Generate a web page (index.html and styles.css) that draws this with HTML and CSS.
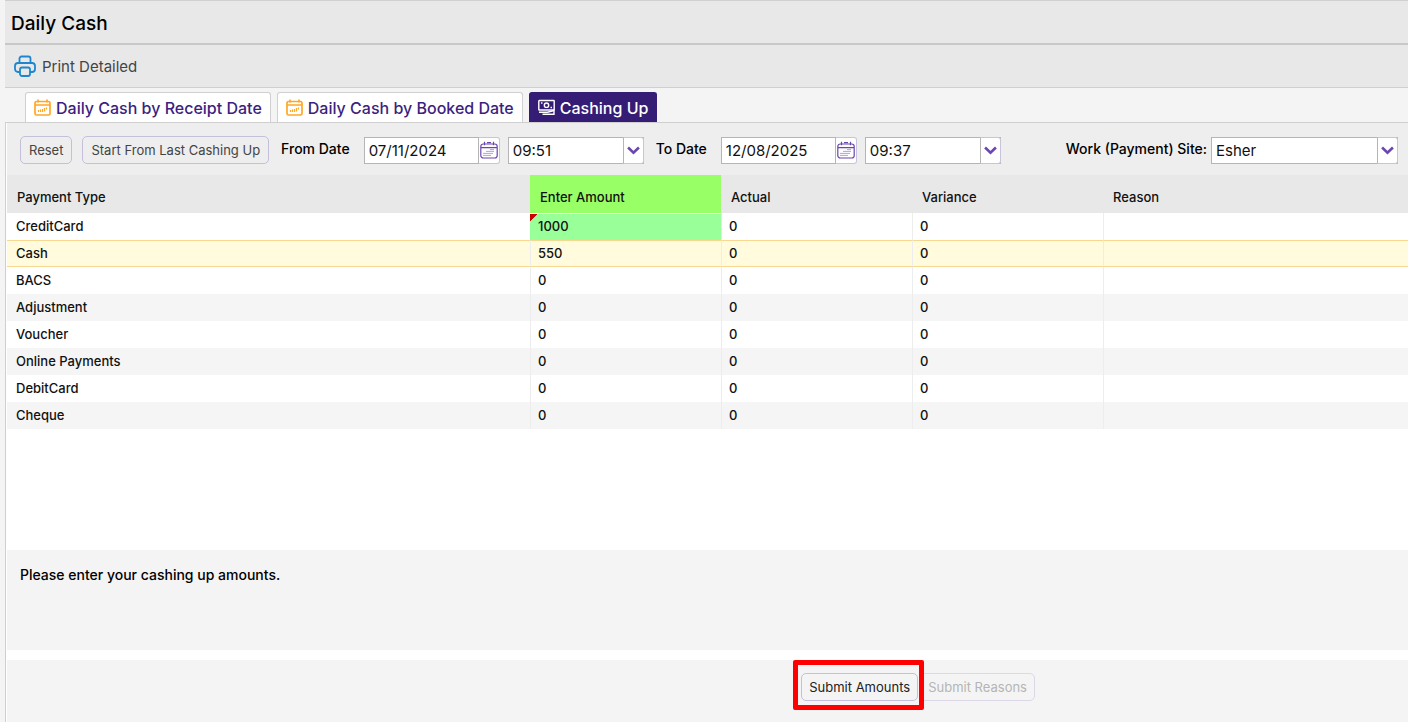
FILE: index.html
```html
<!DOCTYPE html>
<html lang="en">
<head>
    <meta charset="UTF-8">
    <meta name="viewport" content="width=device-width, initial-scale=1.0">
    <title>Daily Cash</title>
    <link rel="stylesheet" href="styles.css">
</head>
<body>
    <!-- Shared icons -->
    <svg class="icon-defs" aria-hidden="true">
        <symbol id="icon-calendar" viewBox="0 0 18 18">
            <g fill="none" stroke="currentColor" stroke-width="1.2">
                <rect x="0.8" y="3" width="16.4" height="14" rx="2.5"/>
                <path d="M1 6.6h16M4.5 0.8v3.4M13.5 0.8v3.4M7 1.6h4"/>
                <path d="M3.5 14.4h8M3.5 12.4h10M6.5 10.4h8M10.5 8.6h4" stroke-width="1" stroke-dasharray="1 1"/>
            </g>
        </symbol>
        <symbol id="icon-tab-calendar" viewBox="0 0 17 17">
            <g fill="none" stroke="currentColor" stroke-width="1.7">
                <rect x="1" y="2.5" width="15" height="13.5" rx="1.5"/>
                <path d="M1 6h15M4 0.5v3M13 0.5v3"/>
                <path d="M4.5 13v-2M6.5 13v-2.500M8.500 13v-3M10.500 12.500V9M12.500 10.500V8.500" stroke-width="1.200"/>
            </g>
        </symbol>
        <symbol id="icon-chevron" viewBox="0 0 12 8">
            <path d="M1 1.200 6 6l5-4.800" fill="none" stroke="currentColor" stroke-width="2.400"/>
        </symbol>
    </svg>

    <div class="page">
        <header class="title-bar">
            <h1>Daily Cash</h1>
        </header>

        <div class="toolbar">
            <button type="button" class="print-button">
                <svg viewBox="0 0 22 22" width="22" height="22" fill="none" stroke="#1c87cf" stroke-width="1.8" stroke-linejoin="round" aria-hidden="true">
                    <path d="M5.500 8V3.500a2 2 0 0 1 2-2h7a2 2 0 0 1 2 2V8"/>
                    <path d="M6 17H4a3 3 0 0 1-3-3v-3a3 3 0 0 1 3-3h14a3 3 0 0 1 3 3v3a3 3 0 0 1-3 3h-2"/>
                    <rect x="6" y="12.500" width="10" height="8.500" rx="2"/>
                </svg>
                Print Detailed
            </button>
        </div>

        <nav class="tabs">
            <a href="#receipt" class="tab">
                <svg class="tab-icon" aria-hidden="true"><use href="#icon-tab-calendar"/></svg>
                Daily Cash by Receipt Date
            </a>
            <a href="#booked" class="tab">
                <svg class="tab-icon" aria-hidden="true"><use href="#icon-tab-calendar"/></svg>
                Daily Cash by Booked Date
            </a>
            <a href="#cashing-up" class="tab active">
                <svg class="tab-icon" viewBox="0 0 17 17" fill="none" stroke="currentColor" stroke-width="1.400" aria-hidden="true">
                    <rect x="0.800" y="1.500" width="15.400" height="9.500" rx="0.500"/>
                    <circle cx="8.500" cy="6.200" r="2.200"/>
                    <path d="M3 4h1.500M12.500 8.500H14"/>
                    <path d="M1 13.200h8.500L16 11.500v3.800H4.500"/>
                </svg>
                Cashing Up
            </a>
        </nav>

        <main class="panel">
            <form class="filters">
                <button type="button" class="button">Reset</button>
                <button type="button" class="button">Start From Last Cashing Up</button>

                <label for="fromDate">From Date</label>
                <div class="date-time">
                    <div class="field">
                        <input type="text" id="fromDate" value="07/11/2024">
                        <button type="button" class="trigger" aria-label="Pick from date"><svg class="calendar"><use href="#icon-calendar"/></svg></button>
                    </div>
                    <div class="field">
                        <select id="fromTime" aria-label="From time">
                            <option>09:51</option>
                        </select>
                        <span class="trigger arrow"><svg class="chevron"><use href="#icon-chevron"/></svg></span>
                    </div>
                </div>

                <label for="toDate">To Date</label>
                <div class="date-time">
                    <div class="field">
                        <input type="text" id="toDate" value="12/08/2025">
                        <button type="button" class="trigger" aria-label="Pick to date"><svg class="calendar"><use href="#icon-calendar"/></svg></button>
                    </div>
                    <div class="field">
                        <select id="toTime" aria-label="To time">
                            <option>09:37</option>
                        </select>
                        <span class="trigger arrow"><svg class="chevron"><use href="#icon-chevron"/></svg></span>
                    </div>
                </div>

                <div class="site">
                    <label for="site">Work (Payment) Site:</label>
                    <div class="field">
                        <select id="site">
                            <option>Esher</option>
                        </select>
                        <span class="trigger arrow"><svg class="chevron"><use href="#icon-chevron"/></svg></span>
                    </div>
                </div>
            </form>

            <div class="grid">
                <table>
                    <colgroup>
                        <col>
                        <col class="amount-col">
                        <col class="amount-col">
                        <col class="amount-col">
                        <col class="reason-col">
                    </colgroup>
                    <thead>
                        <tr>
                            <th>Payment Type</th>
                            <th class="editable">Enter Amount</th>
                            <th>Actual</th>
                            <th>Variance</th>
                            <th>Reason</th>
                        </tr>
                    </thead>
                    <tbody>
                        <tr><td>CreditCard</td><td class="changed">1000</td><td>0</td><td>0</td><td></td></tr>
                        <tr class="selected"><td>Cash</td><td>550</td><td>0</td><td>0</td><td></td></tr>
                        <tr><td>BACS</td><td>0</td><td>0</td><td>0</td><td></td></tr>
                        <tr><td>Adjustment</td><td>0</td><td>0</td><td>0</td><td></td></tr>
                        <tr><td>Voucher</td><td>0</td><td>0</td><td>0</td><td></td></tr>
                        <tr><td>Online Payments</td><td>0</td><td>0</td><td>0</td><td></td></tr>
                        <tr><td>DebitCard</td><td>0</td><td>0</td><td>0</td><td></td></tr>
                        <tr><td>Cheque</td><td>0</td><td>0</td><td>0</td><td></td></tr>
                    </tbody>
                </table>
            </div>

            <div class="message">Please enter your cashing up amounts.</div>

            <footer class="actions">
                <div class="highlight">
                    <button type="button" class="button submit">Submit Amounts</button>
                </div>
                <button type="button" class="button" disabled>Submit Reasons</button>
            </footer>
        </main>
    </div>
</body>
</html>
```
FILE: styles.css
```css
*,
*::after {
    box-sizing: border-box;
}

body {
    margin: 0;
    background-color: #f4f4f4;
    font-family: Inter, "Liberation Sans", sans-serif;
    font-size: 13px;
    color: #111;
}

button,
input,
select {
    font-family: inherit;
}

.icon-defs {
    position: absolute;
    width: 0;
    height: 0;
}

.page {
    display: flex;
    flex-direction: column;
    min-height: 100vh;
    padding-left: 5px;
}

/* Title and toolbar */
.title-bar {
    display: flex;
    align-items: center;
    height: 45px;
    padding: 2px 6px 0;
    background-color: #e8e8e8;
    border-top: 1px solid #d0d0d0;
    border-bottom: 2px solid #c8c8c8;
}

.title-bar h1 {
    margin: 0;
    font-size: 19px;
    font-weight: 500;
    color: #000;
}

.toolbar {
    display: flex;
    align-items: center;
    height: 43px;
    padding: 0 9px;
    background-color: #e8e8e8;
    border-bottom: 1px solid #cfcfcf;
}

.print-button {
    display: flex;
    align-items: center;
    gap: 6px;
    padding: 0;
    border: none;
    background: none;
    font-size: 15px;
    color: #444;
    cursor: pointer;
}

/* Tabs */
.tabs {
    display: flex;
    gap: 6px;
    padding: 4px 20px 0;
}

.tab {
    display: flex;
    align-items: center;
    gap: 5px;
    height: 30px;
    padding: 0 8px;
    border: 1px solid #d0d0d0;
    border-bottom: none;
    border-radius: 3px 3px 0 0;
    background-color: #fff;
    color: #3c1f80;
    font-size: 16px;
    font-weight: 500;
    text-decoration: none;
}

.tab.active {
    border-color: #351c75;
    background-color: #351c75;
    color: #fff;
}

.tab-icon {
    width: 17px;
    height: 17px;
    color: #ffa726;
}

.active .tab-icon {
    color: #fff;
}

/* Panel */
.panel {
    flex: 1;
    display: flex;
    flex-direction: column;
    border-top: 1px solid #cfcfcf;
    border-left: 1px solid #cfcfcf;
    padding-left: 1px;
    background-color: #fff;
}

.filters {
    display: flex;
    align-items: center;
    gap: 10px;
    height: 52px;
    padding: 2px 10px 0 13px;
    background-color: #eee;
}

.filters label {
    padding: 0 4px 3px 2px;
    font-size: 14px;
    font-weight: 500;
    color: #000;
}

.date-time {
    display: flex;
    gap: 8px;
}

.site {
    display: flex;
    align-items: center;
    margin-left: auto;
}

.button {
    height: 28px;
    padding: 0 8px;
    border: 1px solid #c5bfdc;
    border-radius: 5px;
    background-color: transparent;
    font-size: 13px;
    color: #444;
    white-space: nowrap;
    cursor: pointer;
}

.button:disabled {
    border-color: #dcd8e8;
    color: #b5b5b5;
    cursor: default;
}

.field {
    display: flex;
    position: relative;
    width: 136px;
    height: 27px;
}

.site .field {
    width: 187px;
}

.field input,
.field select {
    flex: 1;
    min-width: 0;
    padding: 0 4px;
    border: 1px solid #b5b5b5;
    border-radius: 0;
    background-color: #fff;
    font-size: 15px;
    color: #111;
    appearance: none;
}

.trigger {
    display: flex;
    align-items: center;
    justify-content: center;
    width: 21px;
    padding: 0;
    border: 1px solid #c8c4dc;
    border-left: none;
    border-radius: 0 3px 3px 0;
    background-color: #fff;
    color: #6b46b0;
}

.arrow {
    position: absolute;
    top: 0;
    right: 0;
    bottom: 0;
    border-left: 1px solid #b5b5b5;
    pointer-events: none;
}

.calendar {
    flex: none;
    width: 18px;
    height: 18px;
}

.chevron {
    width: 13px;
    height: 9px;
}

/* Payment grid */
.grid {
    flex: 1;
}

table {
    width: 100%;
    border-collapse: separate;
    border-spacing: 0;
    table-layout: fixed;
    font-weight: 500;
}

.amount-col {
    width: 191px;
}

.reason-col {
    width: 305px;
}

th {
    height: 38px;
    padding: 6px 10px 0;
    background-color: #e8e8e8;
    font-weight: 500;
    text-align: left;
}

th.editable {
    background-color: #99ff66;
}

td {
    height: 27px;
    padding: 0 7px 2px;
    border-left: 1px solid #ededed;
}

td:first-child {
    padding-left: 9px;
    border-left: none;
}

tbody tr:nth-child(even) {
    background-color: #f5f5f5;
}

tbody tr.selected {
    background-color: #fffbdc;
}

.selected td {
    border-top: 1px solid #f8d790;
    border-bottom: 1px solid #f8d790;
}

/* red corner marks an edited cell */
td.changed {
    border-top: 1px solid #fff;
    border-left: none;
    padding-left: 8px;
    background: linear-gradient(135deg, #c00 5px, #99ff99 5px);
}

/* Message and actions */
.message {
    min-height: 100px;
    margin-bottom: 10px;
    padding: 16px 13px;
    background-color: #f4f4f4;
    font-size: 14px;
    font-weight: 500;
    color: #000;
}

.actions {
    display: flex;
    justify-content: flex-end;
    height: 62px;
    padding-right: 373px;
    background-color: #f4f4f4;
}

.actions .button {
    margin-top: 13px;
    padding: 0 7px;
}

.highlight {
    position: relative;
    padding: 0 2px 0 8px;
}

.highlight::after {
    content: "";
    position: absolute;
    top: 0;
    left: 0;
    right: -4px;
    height: 50px;
    border: 5px solid #f00;
    border-radius: 2px;
    pointer-events: none;
}

.submit {
    color: #222;
}
```
